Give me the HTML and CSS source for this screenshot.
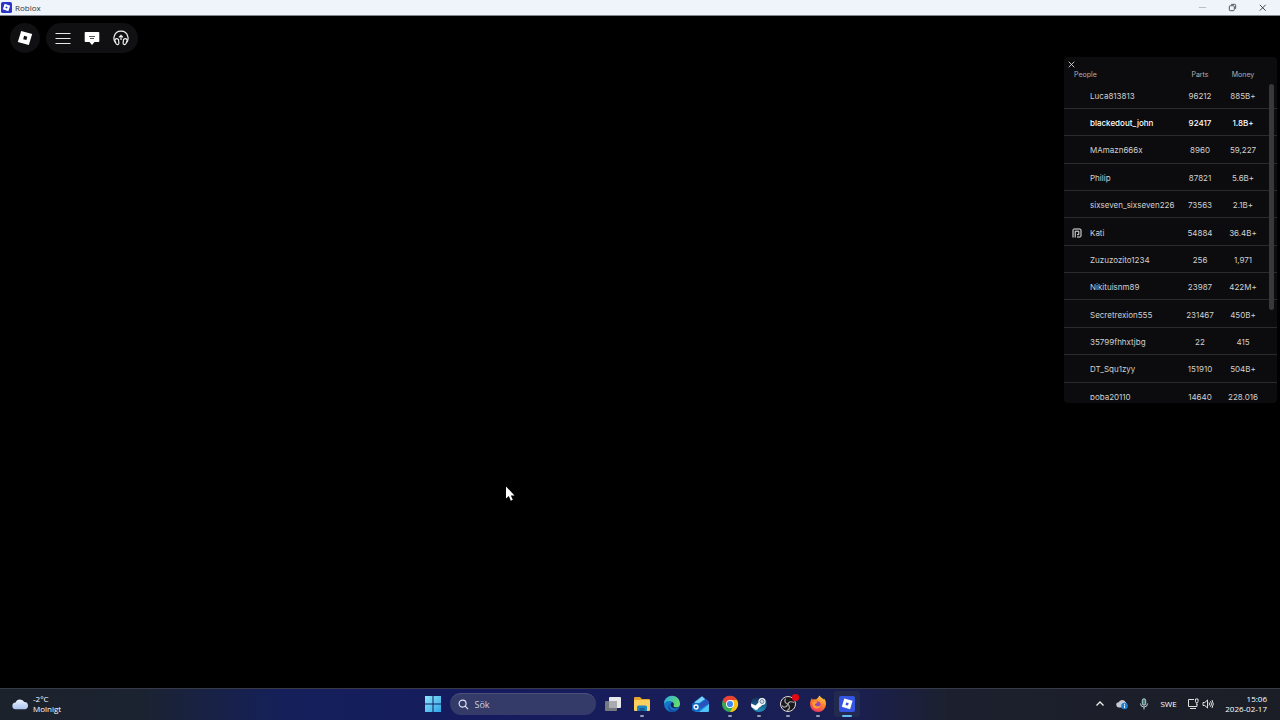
FILE: index.html
```html
<!DOCTYPE html>
<html lang="sv">
<head>
    <meta charset="UTF-8">
    <title>Roblox</title>
    <link rel="stylesheet" href="styles.css">
</head>
<body>
    <!-- Window title bar -->
    <header class="titlebar">
        <svg class="title-icon" viewBox="0 0 24 24"><rect width="24" height="24" rx="4" fill="#2a35c8"/><path fill="#fff" fill-rule="evenodd" d="M8 4l12 4-4 12-12-4zM10.8 9.6l-1.2 3.6 3.6 1.2 1.2-3.6z"/></svg>
        <span class="title">Roblox</span>
        <div class="window-buttons">
            <button aria-label="Minimera"><svg viewBox="0 0 10 10"><path d="M1 5h8" stroke="#b4b8c0"/></svg></button>
            <button aria-label="Återställ"><svg viewBox="0 0 10 10" fill="none" stroke="#444"><rect x="1.5" y="3" width="5.5" height="5.5" rx="1"/><path d="M3.5 1.5H7.500a1 1 0 0 1 1 1V6.500"/></svg></button>
            <button aria-label="Stäng"><svg viewBox="0 0 10 10"><path d="M2 2l6.500 6.500M8.500 2L2 8.500" stroke="#333"/></svg></button>
        </div>
    </header>

    <!-- Game area -->
    <main class="game">
        <nav class="topbar">
            <button class="round" aria-label="Meny"><svg viewBox="0 0 16 16"><path fill="#fff" fill-rule="evenodd" d="M4.200 1L15.200 4.100 11.800 15 .8 12zM7.100 5.800L6.200 9.200l3.200.9.900-3.300z"/></svg></button>
            <div class="pill">
                <button aria-label="Lista"><svg viewBox="0 0 16 16"><path d="M.5 3.500h15M.5 8.500h15M.5 13.500h15" stroke="#e8e8e8"/></svg></button>
                <button aria-label="Chatt"><svg viewBox="0 0 16 16"><path fill="#fff" d="M1.500 2h13a.8.8 0 0 1 .8.800v8.400a.8.8 0 0 1-.8.800H10.500L8 15l-2.500-3H1.500a.8.8 0 0 1-.8-.8V2.800a.8.8 0 0 1 .8-.8z"/><path d="M5 6.500h6M6 8.500h4" stroke="#555"/></svg></button>
                <button aria-label="Röst"><svg viewBox="0 0 16 16" fill="none" stroke="#eee" stroke-width="1.200"><path d="M2.500 12.500C.8 10.500.8 7.800 1.200 6.500 2 3.200 4.800 1.200 8 1.200s6 2 6.800 5.300c.4 1.300.4 4-1.300 6"/><path d="M5.500 9.500C3.500 7.800 1.500 9 2 11l1 2.500c.8 1.600 2.800 1.300 2.900-.3zM10.500 9.500c2-1.700 4-.5 3.500 1.500l-1 2.500c-.8 1.600-2.800 1.300-2.900-.3z"/><path d="M8 10V5.500M6 7.300l2-2 2 2"/></svg></button>
            </div>
        </nav>

        <section class="leaderboard">
            <button class="close" aria-label="Stäng"><svg viewBox="0 0 8 8"><path d="M.8.8l6.400 6.400M7.200.8L.8 7.200" stroke="#ddd"/></svg></button>
            <div class="players">
                <table>
                    <colgroup>
                        <col class="col-badge">
                        <col class="col-name">
                        <col class="col-parts">
                        <col class="col-money">
                        <col>
                    </colgroup>
                    <thead>
                        <tr><th class="name" colspan="2">People</th><th>Parts</th><th>Money</th><th></th></tr>
                    </thead>
                    <tbody>
                        <tr><td></td><td class="name">Luca813813</td><td>96212</td><td>885B+</td><td></td></tr>
                        <tr class="me"><td></td><td class="name">blackedout_john</td><td>92417</td><td>1.8B+</td><td></td></tr>
                        <tr><td></td><td class="name">MAmazn666x</td><td>8960</td><td>59,227</td><td></td></tr>
                        <tr><td></td><td class="name">Philip</td><td>87821</td><td>5.6B+</td><td></td></tr>
                        <tr><td></td><td class="name">sixseven_sixseven226</td><td>73563</td><td>2.1B+</td><td></td></tr>
                        <tr><td class="badge"><svg viewBox="0 0 10 10" fill="none" stroke="#eee"><path d="M1 9.500V2a1 1 0 0 1 1-1h6a1 1 0 0 1 1 1v6a1 1 0 0 1-1 1H5"/><path d="M3.200 9.500V3.200H6.800V6.700H5"/></svg></td><td class="name">Kati</td><td>54884</td><td>36.4B+</td><td></td></tr>
                        <tr><td></td><td class="name">Zuzuzozito1234</td><td>256</td><td>1,971</td><td></td></tr>
                        <tr><td></td><td class="name">Nikituisnm89</td><td>23987</td><td>422M+</td><td></td></tr>
                        <tr><td></td><td class="name">Secretrexion555</td><td>231467</td><td>450B+</td><td></td></tr>
                        <tr><td></td><td class="name">35799fhhxtjbg</td><td>22</td><td>415</td><td></td></tr>
                        <tr><td></td><td class="name">DT_Squ1zyy</td><td>151910</td><td>504B+</td><td></td></tr>
                        <tr><td></td><td class="name">poba20110</td><td>14640</td><td>228,016</td><td></td></tr>
                    </tbody>
                </table>
            </div>
            <div class="scrollbar"></div>
        </section>

        <svg class="cursor" viewBox="0 0 10 16"><path fill="#fff" d="M1 .5v12l2.800-2.400 2 4.600 2-.9-2-4.400h3.700z"/></svg>
    </main>

    <!-- Taskbar -->
    <footer class="taskbar">
        <button class="weather">
            <svg viewBox="0 0 18 12"><defs><linearGradient id="cloud" x2="0" y2="1"><stop stop-color="#eef3ff"/><stop offset="1" stop-color="#a9c3ee"/></linearGradient></defs><path fill="url(#cloud)" d="M4 11.500a3.500 3.500 0 0 1-.2-7A5 5 0 0 1 13 4a3.800 3.800 0 0 1 1 7.500z"/></svg>
            <span>-2°C<br>Molnigt</span>
        </button>

        <div class="center">
            <button class="app" aria-label="Start"><svg viewBox="0 0 18 18"><defs><linearGradient id="win" x2="1" y2="1"><stop stop-color="#8be4fb"/><stop offset="1" stop-color="#2fa5e8"/></linearGradient></defs><path fill="url(#win)" d="M1 1h7.500v7.500H1zM9.500 1H17v7.500H9.500zM1 9.500h7.500V17H1zM9.500 9.500H17V17H9.500z"/></svg></button>
            <label class="search">
                <svg viewBox="0 0 12 12" fill="none" stroke="#dfe3f5" stroke-width="1.300"><circle cx="5" cy="5" r="3.800"/><path d="M7.800 7.800L11 11"/></svg>
                <input type="text" placeholder="Sök" aria-label="Sök">
            </label>
            <div class="apps">
                <button class="app" aria-label="Aktivitetsvyn"><svg viewBox="0 0 18 18"><rect x="1" y="6" width="12" height="10" rx="1" fill="#777981"/><rect x="5" y="2" width="12" height="11" rx="1" fill="#e9e9ec"/><path fill="#aaabb0" d="M5 6h8v7H5z"/></svg></button>
                <button class="app open" aria-label="Utforskaren"><svg viewBox="0 0 18 18"><path fill="#e5a52b" d="M1 3a1 1 0 0 1 1-1h5l2 2h7a1 1 0 0 1 1 1v4H1z"/><rect x="1" y="5" width="16" height="11" rx="1" fill="#fbd05c"/><path fill="#1c86c6" d="M4 16v-4a1.500 1.500 0 0 1 1.500-1.500h7A1.500 1.500 0 0 1 14 12v4z"/><path fill="#156293" d="M6.500 13h5v3h-5z"/></svg></button>
                <button class="app" aria-label="Edge"><svg viewBox="0 0 18 18"><defs><linearGradient id="edge" x2="1" y2=".4"><stop stop-color="#29a9e8"/><stop offset="1" stop-color="#63dd70"/></linearGradient></defs><circle cx="9" cy="9" r="8" fill="#1676cf"/><path fill="url(#edge)" d="M1 9a8 8 0 0 1 16-.7c.2 3-2 4.200-4.300 4.200-2 0-3-.9-2.200-2C11.500 8.600 9.500 6 6.500 6 3.500 6 1.500 7.500 1 9z"/><path fill="#114fa1" d="M6.800 8.500c-1.800 4 1.700 7 5.400 6.500 1.600-.2 2.800-.8 3.600-1.500-1.500 2.400-4 3.500-6.800 3.500-3.500-1-5.500-5-2.200-8.500z"/><path fill="#191e58" d="M9.200 7.300c-1.700.7-2.100 3.300-.7 4.800 1.700 1.700 4.800 1.900 8 .1-.8.300-4.300.8-5.700-.4-1-.9.100-1.300 0-2.400 0-1-.6-1.700-1.600-2.100z"/></svg></button>
                <button class="app" aria-label="Outlook"><svg viewBox="0 0 18 18"><path fill="#1679d6" d="M2 7l8-6 7 6v8a2 2 0 0 1-2 2H4a2 2 0 0 1-2-2z"/><path fill="#7bd5fa" d="M3 7l7-5.500L13 4 3 11z"/><path fill="#2952bc" d="M17 6.500V9L8 13.500l-2-3L14 4z"/><path fill="#50c2f5" d="M17 9v6.500a1.500 1.500 0 0 1-1.500 1.500H7z"/><rect y="8" width="8" height="8" rx="1.500" fill="#1369bd"/><circle cx="4" cy="12" r="2" fill="none" stroke="#fff" stroke-width="1.300"/></svg></button>
                <button class="app open" aria-label="Chrome"><svg viewBox="0 0 18 18"><circle cx="9" cy="9" r="8" fill="#35a853"/><path fill="#e94235" d="M2 5a8 8 0 0 1 14 0H9L5.500 11z"/><path fill="#fbc116" d="M9 5h7a8 8 0 0 1-7 12l3.500-6z"/><circle cx="9" cy="9" r="4" fill="#fff"/><circle cx="9" cy="9" r="3.100" fill="#4285f4"/></svg></button>
                <button class="app open" aria-label="Steam"><svg viewBox="0 0 18 18"><defs><linearGradient id="steam" x2="0" y2="1"><stop stop-color="#14204c"/><stop offset="1" stop-color="#2391bd"/></linearGradient></defs><circle cx="9" cy="9" r="8" fill="url(#steam)"/><path fill="#fff" d="M1 8.500l4.500 2 3.500-3.500 3 3.500-3.500 2.500a2.500 2.500 0 0 1-4.500.8L1.300 12z"/><circle cx="12" cy="6.500" r="3.600" fill="#fff"/><circle cx="12" cy="6.500" r="2" fill="#d5dfeb" stroke="#39597c" stroke-width=".7"/></svg></button>
                <button class="app open" aria-label="OBS Studio"><svg viewBox="0 0 18 18"><circle cx="9" cy="9" r="7.500" fill="#17171c" stroke="#ddd"/><path fill="none" stroke="#aaa" stroke-width="1.200" d="M6.500 3.500c-1.500 3 0 5 2.500 5.500M15 7.500c-3.500-1.500-5.500-.5-6 1.500M8 15.500c3-1 3-4 1-6.500M3 10.500c1.500 2.500 4.500 2 6-1.500"/></svg><span class="recording"></span></button>
                <button class="app open" aria-label="Firefox"><svg viewBox="0 0 18 18"><defs><linearGradient id="fox" x1=".8" x2=".3" y2="1"><stop stop-color="#ffe04b"/><stop offset=".45" stop-color="#ff832c"/><stop offset="1" stop-color="#e92f69"/></linearGradient></defs><path fill="url(#fox)" d="M10.500.5c1 2 3 2.500 4 4 .5-.3.400-1 .300-1.300C16.500 5 17 7 17 9.200A8 8 0 0 1 1 9c0-2.500 1-4.500 2-6 .2 1 .5 1.500 1 1.800C5 4.200 6 4.200 7 4.500c1-.7 2.500-2 3.500-4z"/><circle cx="8.500" cy="9.500" r="3" fill="#9a45b8"/><path fill="#ff9a31" d="M3.500 7c2-1 3.500-.5 5 .5-.5 1-2.500 1-2.700 2 .7 2.500 4.200 2 5.700.5-.3 3-3 4.200-5 3.700C3.800 13 3 9.500 3.500 7z"/></svg></button>
                <button class="app active" aria-label="Roblox"><svg viewBox="0 0 18 18"><rect x="1" y="1" width="16" height="16" rx="2" fill="#3455e4"/><path fill="#fff" fill-rule="evenodd" d="M6.300 3.500l8.200 2.300-2.400 8.400-8.300-2.400zM8.200 7.400l-.7 2.500 2.500.7.700-2.500z"/></svg></button>
            </div>
        </div>

        <div class="tray">
            <button class="more" aria-label="Visa dolda ikoner"><svg viewBox="0 0 12 12"><path d="M2.500 7.500L6 4l3.500 3.500" fill="none" stroke="#eee" stroke-width="1.300"/></svg></button>
            <button class="cloud" aria-label="OneDrive"><svg viewBox="0 0 12 12"><path fill="#c5c9d0" d="M3 9.500a2.600 2.600 0 0 1-.3-5.200A3.700 3.700 0 0 1 9.500 4L11 6v3.500z"/><circle cx="8.500" cy="8" r="3.300" fill="#1781d8"/><path d="M8.500 7.500v2.300M8.500 5.800v1" stroke="#fff"/></svg></button>
            <button class="mic" aria-label="Mikrofon"><svg viewBox="0 0 12 12" fill="none" stroke="#bcd0d0"><rect x="4.300" y=".8" width="3.400" height="6.400" rx="1.700" fill="#447c78"/><path d="M2.500 5.500a3.500 3.500 0 0 0 7 0M6 9v2.500"/></svg></button>
            <button class="lang">SWE</button>
            <button class="net" aria-label="Nätverk och volym">
                <svg viewBox="0 0 12 12" fill="none" stroke="#ddd"><path d="M7 1.500H1.500v7h8.500V6M3 10.500h6"/><path d="M8.500 1v2.500a1.200 1.200 0 0 0 2.500 0V1zM9.800 4.500V7"/></svg>
                <svg viewBox="0 0 12 12" fill="none" stroke="#ddd"><path d="M1 4.500h1.800L5.500 2v8L2.800 7.500H1zM7 4.500q1.200 1.500 0 3M8.500 3.200q2 2.800 0 5.600M10 2q2.600 4 0 8"/></svg>
            </button>
            <button class="clock">15:06<br>2026-02-17</button>
        </div>
    </footer>
</body>
</html>
```
FILE: styles.css
```css
* {
    box-sizing: border-box;
}
body {
    margin: 0;
    min-height: 100vh;
    display: flex;
    flex-direction: column;
    background: #000;
    color: #fff;
    font-family: "Open Sans", "Noto Sans", sans-serif;
    font-size: 8px;
}
button {
    padding: 0;
    border: none;
    background: none;
    color: inherit;
    font: inherit;
    display: flex;
    align-items: center;
    justify-content: center;
}
svg {
    display: block;
    flex: none;
}

/* Title bar */
.titlebar {
    display: flex;
    align-items: center;
    height: 16px;
    padding: 0 3px 1px 1px;
    background: #eff3fa;
    border-bottom: 1px solid #83868c;
    color: #333;
}
.title-icon {
    width: 11px;
    height: 11px;
}
.title {
    flex: 1;
    margin-left: 3px;
}
.window-buttons {
    display: flex;
}
.window-buttons button {
    width: 30px;
    height: 14px;
}
.window-buttons svg {
    width: 9px;
    height: 9px;
}

/* Game */
.game {
    flex: 1;
    position: relative;
    display: flex;
    justify-content: space-between;
    align-items: flex-start;
}
.topbar {
    display: flex;
    gap: 6px;
    padding: 7px 10px;
}
.topbar svg {
    width: 16px;
    height: 16px;
}
.topbar button {
    width: 29px;
    height: 30px;
}
.topbar .round {
    width: 30px;
    border-radius: 15px;
    background: #101012;
}
.pill {
    display: flex;
    padding: 0 3px 0 2px;
    border-radius: 15px;
    background: #101012;
}

/* Leaderboard */
.leaderboard {
    position: relative;
    width: 213px;
    margin: 41px 3px 0 0;
    padding-bottom: 3px;
    border-radius: 4px;
    background: #0c0c0e;
    color: #d0d0d0;
    font-family: Inter, Roboto, sans-serif;
}
.close {
    width: 15px;
    height: 13px;
    padding-top: 1px;
}
.close svg {
    width: 7px;
    height: 7px;
}
.players {
    height: 330px;
    overflow: hidden;
}
table {
    width: 100%;
    height: 340px;
    border-collapse: collapse;
    table-layout: fixed;
}
.col-badge {
    width: 26px;
}
.col-name {
    width: 89px;
}
.col-parts {
    width: 42px;
}
.col-money {
    width: 44px;
}
th, td {
    padding: 0;
    text-align: center;
    white-space: nowrap;
}
th {
    height: 12px;
    padding-bottom: 2px;
    font-size: 7px;
    line-height: 8px;
    font-weight: 400;
    color: #b0b0b0;
}
td {
    padding-top: 2px;
    font-size: 8px;
    line-height: 10px;
}
tbody tr {
    border-bottom: 1px solid #2b2b2d;
}
.name {
    text-align: left;
}
th.name {
    padding-left: 10px;
}
.badge svg {
    width: 10px;
    height: 10px;
    margin: 0 auto;
}
.me {
    color: #fff;
    font-weight: 500;
}
.scrollbar {
    position: absolute;
    top: 27px;
    right: 3px;
    width: 5px;
    height: 226px;
    border-radius: 3px;
    background: #38383a;
}
.cursor {
    position: absolute;
    left: 505px;
    top: 470px;
    width: 10px;
    height: 16px;
}

/* Taskbar */
.taskbar {
    display: grid;
    grid-template-columns: 1fr auto 1fr;
    align-items: center;
    height: 32px;
    padding-bottom: 2px;
    border-top: 1px solid #383a48;
    background: linear-gradient(90deg, #1c222b 0%, #1b2331 11%, #15205a 22%, #151b5e 38%, #191e58 55%, #1a1f50 67%, #1c202e 74%, #1b1e26 100%);
}
.weather {
    justify-self: start;
    gap: 4px;
    padding-left: 12px;
    line-height: 10px;
    text-align: left;
}
.weather svg {
    width: 17px;
    height: 12px;
}
.center {
    display: flex;
    align-items: center;
    gap: 2px;
}
.app {
    position: relative;
    width: 29px;
    height: 26px;
}
.app svg {
    width: 18px;
    height: 18px;
}
.search {
    display: flex;
    align-items: center;
    gap: 6px;
    width: 146px;
    height: 22px;
    padding: 0 8px;
    border-radius: 11px;
    border-top: 1px solid #4c517c;
    background: #343b68;
}
.search svg {
    width: 11px;
    height: 11px;
}
.search input {
    min-width: 0;
    flex: 1;
    padding: 0;
    border: none;
    outline: none;
    background: none;
    color: #fff;
    font: 9px "Open Sans", sans-serif;
}
.search input::placeholder {
    color: #ccd0e4;
}
.apps {
    display: grid;
    grid-template-columns: repeat(9, 1fr);
    justify-items: center;
    width: 264px;
    padding-left: 1px;
}
/* running app marker */
.open::after, .active::after {
    content: "";
    position: absolute;
    bottom: 0;
    width: 4px;
    height: 2px;
    border-radius: 1px;
    background: #9a9db8;
}
.active {
    width: 26px;
    border-radius: 3px;
    background: #232a50;
}
.active::after {
    width: 10px;
    background: #62bdf0;
}
.recording {
    position: absolute;
    top: 3px;
    right: 4px;
    width: 7px;
    height: 7px;
    border-radius: 3px;
    background: #e00914;
}
.tray {
    justify-self: end;
    display: flex;
    align-items: center;
    padding-right: 13px;
}
.tray svg {
    width: 12px;
    height: 12px;
}
.more, .cloud, .mic {
    width: 22px;
    height: 28px;
}
.lang {
    width: 27px;
    height: 28px;
}
.net {
    gap: 3px;
    width: 36px;
}
.clock {
    justify-content: flex-end;
    width: 49px;
    line-height: 10px;
    text-align: right;
}
```
